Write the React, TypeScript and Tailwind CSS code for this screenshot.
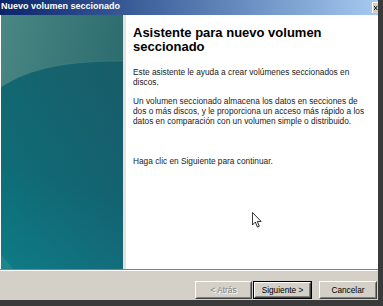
import React from 'react'

const sans = { fontFamily: '"Liberation Sans", Arial, sans-serif' }

function SidePanel() {
  return (
    <div className="w-[122px] h-full shrink-0 ml-[1px]">
      <svg width="122" height="254" viewBox="0 0 122 254" className="block">
        <defs>
          <linearGradient id="top" x1="0" y1="0" x2="1" y2="0.4">
            <stop offset="0" stopColor="#4a8784" />
            <stop offset="1" stopColor="#2a6a6d" />
          </linearGradient>
          <linearGradient id="low" x1="0.2" y1="0" x2="0" y2="1">
            <stop offset="0" stopColor="#175d66" />
            <stop offset="0.5" stopColor="#116570" />
            <stop offset="1" stopColor="#0f7c86" />
          </linearGradient>
          <linearGradient id="lowH" x1="0" y1="0" x2="1" y2="0">
            <stop offset="0" stopColor="#0a7c84" stopOpacity="0.3" />
            <stop offset="1" stopColor="#1a5c74" stopOpacity="0.3" />
          </linearGradient>
        </defs>
        <rect width="122" height="254" fill="url(#top)" />
        <path d="M0 72 C 30 52, 70 46, 122 46 L122 254 L0 254 Z" fill="url(#low)" />
        <path d="M0 72 C 30 52, 70 46, 122 46 L122 254 L0 254 Z" fill="url(#lowH)" />
        <path d="M0 72 C 30 52, 70 46, 122 46" fill="none" stroke="#5a9290" strokeOpacity="0.35" strokeWidth="1" />
        <path d="M0 240 C 4 244, 8 248, 12 254 L0 254 Z" fill="#2a9096" fillOpacity="0.5" />
      </svg>
    </div>
  )
}

function Cursor() {
  return (
    <svg width="10" height="16" viewBox="0 0 12 19" className="absolute left-[252px] top-[197px]">
      <path
        d="M0.5 0.5 L0.5 15.5 L4 12 L6.5 18 L8.8 17 L6.3 11.2 L11 11.2 Z"
        fill="#ffffff"
        stroke="#000000"
        strokeWidth="1"
        strokeLinejoin="miter"
      />
    </svg>
  )
}

function Button({ label, primary, disabled, className }: { label: string; primary?: boolean; disabled?: boolean; className?: string }) {
  const face = (
    <div className="h-full w-full border border-t-white border-l-white border-r-[#404040] border-b-[#404040] bg-[#d4d0c8]">
      <div className="h-full w-full border border-t-[#d4d0c8] border-l-[#d4d0c8] border-r-[#808080] border-b-[#808080] flex items-center justify-center">
        {disabled ? (
          <span className="text-[8.3px] text-[#808080] [text-shadow:1px_1px_0_#ffffff]" style={sans}>
            {label}
          </span>
        ) : (
          <span className="text-[8.3px] text-black" style={sans}>
            {label}
          </span>
        )}
      </div>
    </div>
  )
  return (
    <div className={`h-[18px] ${primary ? 'border border-black' : ''} ${className ?? ''}`}>{face}</div>
  )
}

export default function App() {
  return (
    <div className="w-[383px] h-[306px] bg-[#3a3a3a] overflow-hidden">
      <div className="w-[378px] h-[300px] bg-[#d4d0c8] flex flex-col">
        <div className="h-[15px] shrink-0 bg-gradient-to-r from-[#0a246a] to-[#a6caf0] flex items-start justify-between">
          <span className="text-white font-bold text-[9px] leading-[13px] pl-[1px] whitespace-nowrap" style={sans}>
            Nuevo volumen seccionado
          </span>
          <div className="w-[6px] h-[11px] mt-[2px] bg-[#d4d0c8] border-l border-t border-white flex items-center overflow-hidden">
            <svg width="6" height="8" viewBox="0 0 6 8" className="ml-[1px]">
              <path d="M0 1 L5 7 M5 1 L0 7" stroke="#000" strokeWidth="1.4" />
            </svg>
          </div>
        </div>
        <div className="h-[254px] shrink-0 flex bg-white relative">
          <SidePanel />
          <div className="w-[3px] h-full bg-[#e4e2dc]" />
          <div className="flex-1 pl-[7px] pt-[11px] text-black" style={sans}>
            <h1 className="text-[13px] leading-[14px] font-bold whitespace-nowrap">
              Asistente para nuevo volumen
              <br />
              seccionado
            </h1>
            <p className="mt-[12.6px] text-[8.3px] leading-[10px] whitespace-nowrap text-[#1a1a1a]">
              Este asistente le ayuda a crear volúmenes seccionados en
              <br />
              discos.
            </p>
            <p className="mt-[9px] text-[8.3px] leading-[10px] whitespace-nowrap text-[#1a1a1a]">
              Un volumen seccionado almacena los datos en secciones de
              <br />
              dos o más discos, y le proporciona un acceso más rápido a los
              <br />
              datos en comparación con un volumen simple o distribuido.
            </p>
            <p className="mt-[30.5px] text-[8.3px] leading-[10px] whitespace-nowrap text-[#1a1a1a]">
              Haga clic en Siguiente para continuar.
            </p>
          </div>
          <Cursor />
        </div>
        <div className="h-[1px] bg-[#808080]" />
        <div className="h-[1px] bg-white" />
        <div className="flex-1 flex items-start pt-[10px] pl-[195px]">
          <Button label="< Atrás" disabled className="w-[57px]" />
          <Button label="Siguiente >" primary className="w-[59px] ml-[1px]" />
          <Button label="Cancelar" className="w-[58px] ml-[7px]" />
        </div>
      </div>
    </div>
  )
}
